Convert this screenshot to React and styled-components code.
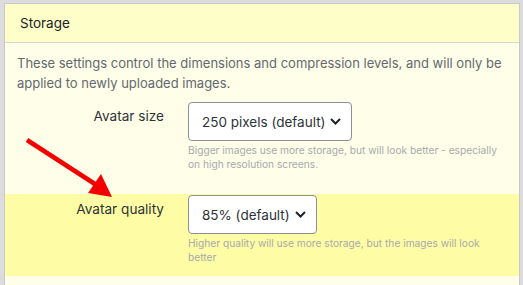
import React from 'react';
import styled, { createGlobalStyle } from 'styled-components';

const GlobalStyle = createGlobalStyle`
  html, body {
    margin: 0;
    padding: 0;
    background: #dcdcde;
    font-family: Inter, "Noto Sans", "Liberation Sans", sans-serif;
    overflow: hidden;
  }
`;

const Page = styled.div`
  padding: 3px 3px 0 4px;
  height: 285px;
  box-sizing: border-box;
`;

const Panel = styled.section`
  position: relative;
  background: #fefee9;
  border: 1px solid #c9c9c6;
  border-bottom: none;
  height: 100%;
  box-sizing: border-box;
`;

const Header = styled.h2`
  margin: 0;
  height: 38px;
  display: flex;
  align-items: center;
  padding: 0 15px;
  background: #fefec9;
  border-bottom: 1px solid #d6d6cc;
  font-size: 13.5px;
  font-weight: 400;
  color: #1d2327;
`;

const Intro = styled.p`
  margin: 0;
  padding: 10px 12px 8px;
  font-size: 13px;
  line-height: 20px;
  color: #646970;
`;

const Rows = styled.div`
  display: flex;
  flex-direction: column;
  gap: 11px;
`;

const Row = styled.div`
  display: grid;
  grid-template-columns: 159px 1fr;
  column-gap: 24px;
  padding: 1px 12px 12px 0;
  background: ${p => (p.$highlight ? '#fefda5' : 'transparent')};
`;

const Label = styled.label`
  text-align: right;
  padding-top: 4px;
  font-size: 13.6px;
  line-height: 20px;
  color: #2c3338;
`;

const Field = styled.div`
  display: flex;
  flex-direction: column;
  align-items: flex-start;
`;

const SelectBox = styled.div`
  display: flex;
  align-items: center;
  gap: 5px;
  height: 39px;
  box-sizing: border-box;
  padding: 0 10px 0 13px;
  border: 1px solid #8c8f94;
  border-radius: 4px;
  background: #fff;
  font-size: 13.5px;
  color: #2c3338;
`;

const Help = styled.p`
  margin: 3px 0 0;
  font-size: 10.2px;
  line-height: 13.5px;
  color: #a7aaad;
  max-width: 312px;
`;

const Arrow = styled.svg`
  position: absolute;
  left: 0;
  top: 0;
  pointer-events: none;
`;

const Chevron = () => (
  <svg width="11" height="7" viewBox="0 0 11 7">
    <path d="M1 1l4.5 4.5L10 1" fill="none" stroke="#1d2327" strokeWidth="2" />
  </svg>
);

const settings = [
  {
    label: 'Avatar size',
    value: '250 pixels (default)',
    help: 'Bigger images use more storage, but will look better - especially on high resolution screens.',
  },
  {
    label: 'Avatar quality',
    value: '85% (default)',
    help: 'Higher quality will use more storage, but the images will look better',
    highlight: true,
  },
];

export default function App() {
  return (
    <Page>
      <GlobalStyle />
      <Panel>
        <Header>Storage</Header>
        <Intro>
          These settings control the dimensions and compression levels, and will only be
          applied to newly uploaded images.
        </Intro>
        <Rows>
          {settings.map(s => (
            <Row key={s.label} $highlight={s.highlight}>
              <Label>{s.label}</Label>
              <Field>
                <SelectBox>
                  {s.value}
                  <Chevron />
                </SelectBox>
                <Help>{s.help}</Help>
              </Field>
            </Row>
          ))}
        </Rows>
        <Arrow width="120" height="210" viewBox="0 0 120 210">
          <line x1="22" y1="136" x2="93" y2="182" stroke="#f40000" strokeWidth="4.5" />
          <polygon points="107,193 83,189 96,170" fill="#f40000" />
        </Arrow>
      </Panel>
    </Page>
  );
}
